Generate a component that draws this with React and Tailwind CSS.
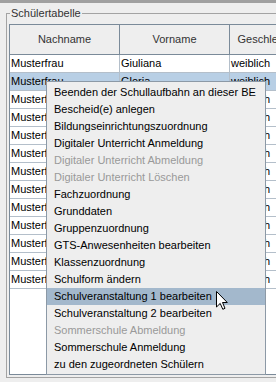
import React from "react";

const rows = [
  ["Musterfrau", "Giuliana", "weiblich"],
  ["Musterfrau", "Gloria", "weiblich"],
  ["Musterfrau", "Hanna", "weiblich"],
  ["Musterfrau", "Ida", "weiblich"],
  ["Musterfrau", "Jana", "weiblich"],
  ["Musterfrau", "Klara", "weiblich"],
  ["Musterfrau", "Lena", "weiblich"],
  ["Musterfrau", "Mia", "weiblich"],
  ["Musterfrau", "Nora", "weiblich"],
  ["Musterfrau", "Olga", "weiblich"],
  ["Musterfrau", "Paula", "weiblich"],
  ["Musterfrau", "Rita", "weiblich"],
  ["Musterfrau", "Sara", "weiblich"],
];

const items = [
  ["Beenden der Schullaufbahn an dieser BE", "on"],
  ["Bescheid(e) anlegen", "on"],
  ["Bildungseinrichtungszuordnung", "on"],
  ["Digitaler Unterricht Anmeldung", "on"],
  ["Digitaler Unterricht Abmeldung", "off"],
  ["Digitaler Unterricht Löschen", "off"],
  ["Fachzuordnung", "on"],
  ["Grunddaten", "on"],
  ["Gruppenzuordnung", "on"],
  ["GTS-Anwesenheiten bearbeiten", "on"],
  ["Klassenzuordnung", "on"],
  ["Schulform ändern", "on"],
  ["Schulveranstaltung 1 bearbeiten", "sel"],
  ["Schulveranstaltung 2 bearbeiten", "on"],
  ["Sommerschule Abmeldung", "off"],
  ["Sommerschule Anmeldung", "on"],
  ["zu den zugeordneten Schülern", "on"],
];

export default function App() {
  return (
    <div className="relative w-[276px] h-[382px] overflow-hidden bg-[#eeeeee] font-['Liberation_Sans',Arial,sans-serif] text-[11px] text-black">
      <div className="h-[3px] bg-[#a0a0a0]" />
      <div className="relative mt-[10px] ml-[6px] w-[300px] h-[365px] border border-[#a3a3a3]">
        <span className="absolute -top-[8px] left-[3px] px-[1px] bg-[#eeeeee] leading-[14px] text-[#333333]">
          Schülertabelle
        </span>
        <div className="ml-[2px] mt-[10px] w-[298px] h-[351px] border border-[#7a8a99] bg-white flex flex-col">
          <div className="flex h-[30px] shrink-0 border-b border-[#7a8a99] bg-[#eeeeee] text-[#333333]">
            <div className="w-[110px] shrink-0 border-r border-[#7a8a99] flex items-center justify-center">Nachname</div>
            <div className="w-[110px] shrink-0 border-r border-[#7a8a99] flex items-center justify-center">Vorname</div>
            <div className="w-[70px] shrink-0 flex items-center justify-center">Geschlecht</div>
          </div>
          {rows.map((r, i) => (
            <div
              key={i}
              className={
                "flex h-[18px] shrink-0 border-b border-[#b4bfca] " +
                (i === 1 ? "bg-[#b8cfe5]" : "bg-white")
              }
            >
              <div className="w-[110px] shrink-0 border-r border-[#b4bfca] pl-[1px] leading-[17px] whitespace-nowrap overflow-hidden">{r[0]}</div>
              <div className="w-[110px] shrink-0 border-r border-[#b4bfca] pl-[1px] leading-[17px] whitespace-nowrap overflow-hidden">{r[1]}</div>
              <div className="w-[70px] shrink-0 pl-[1px] leading-[17px] whitespace-nowrap overflow-hidden">{r[2]}</div>
            </div>
          ))}
        </div>
      </div>

      <div className="absolute left-[46px] top-[81px] w-[220px] border border-[#8c99a6] bg-[#eeeeee] pt-[2px] pb-[1px]">
        {items.map(([t, s]) => (
          <div
            key={t}
            className={
              "h-[17px] leading-[17px] pl-[7px] whitespace-nowrap " +
              (s === "sel" ? "bg-[#a3b8cc] text-black" : s === "off" ? "text-[#999999]" : "text-black")
            }
          >
            {t}
          </div>
        ))}
      </div>

      <svg className="absolute left-[215px] top-[290px]" width="14" height="21" viewBox="0 0 14 21">
        <path
          d="M1.5 1.5 L1.5 17 L5.2 13.4 L7.8 19.3 L10 18.3 L7.5 12.5 L12.3 12.5 Z"
          fill="white"
          stroke="black"
          strokeWidth="1"
          strokeLinejoin="miter"
        />
      </svg>
    </div>
  );
}
